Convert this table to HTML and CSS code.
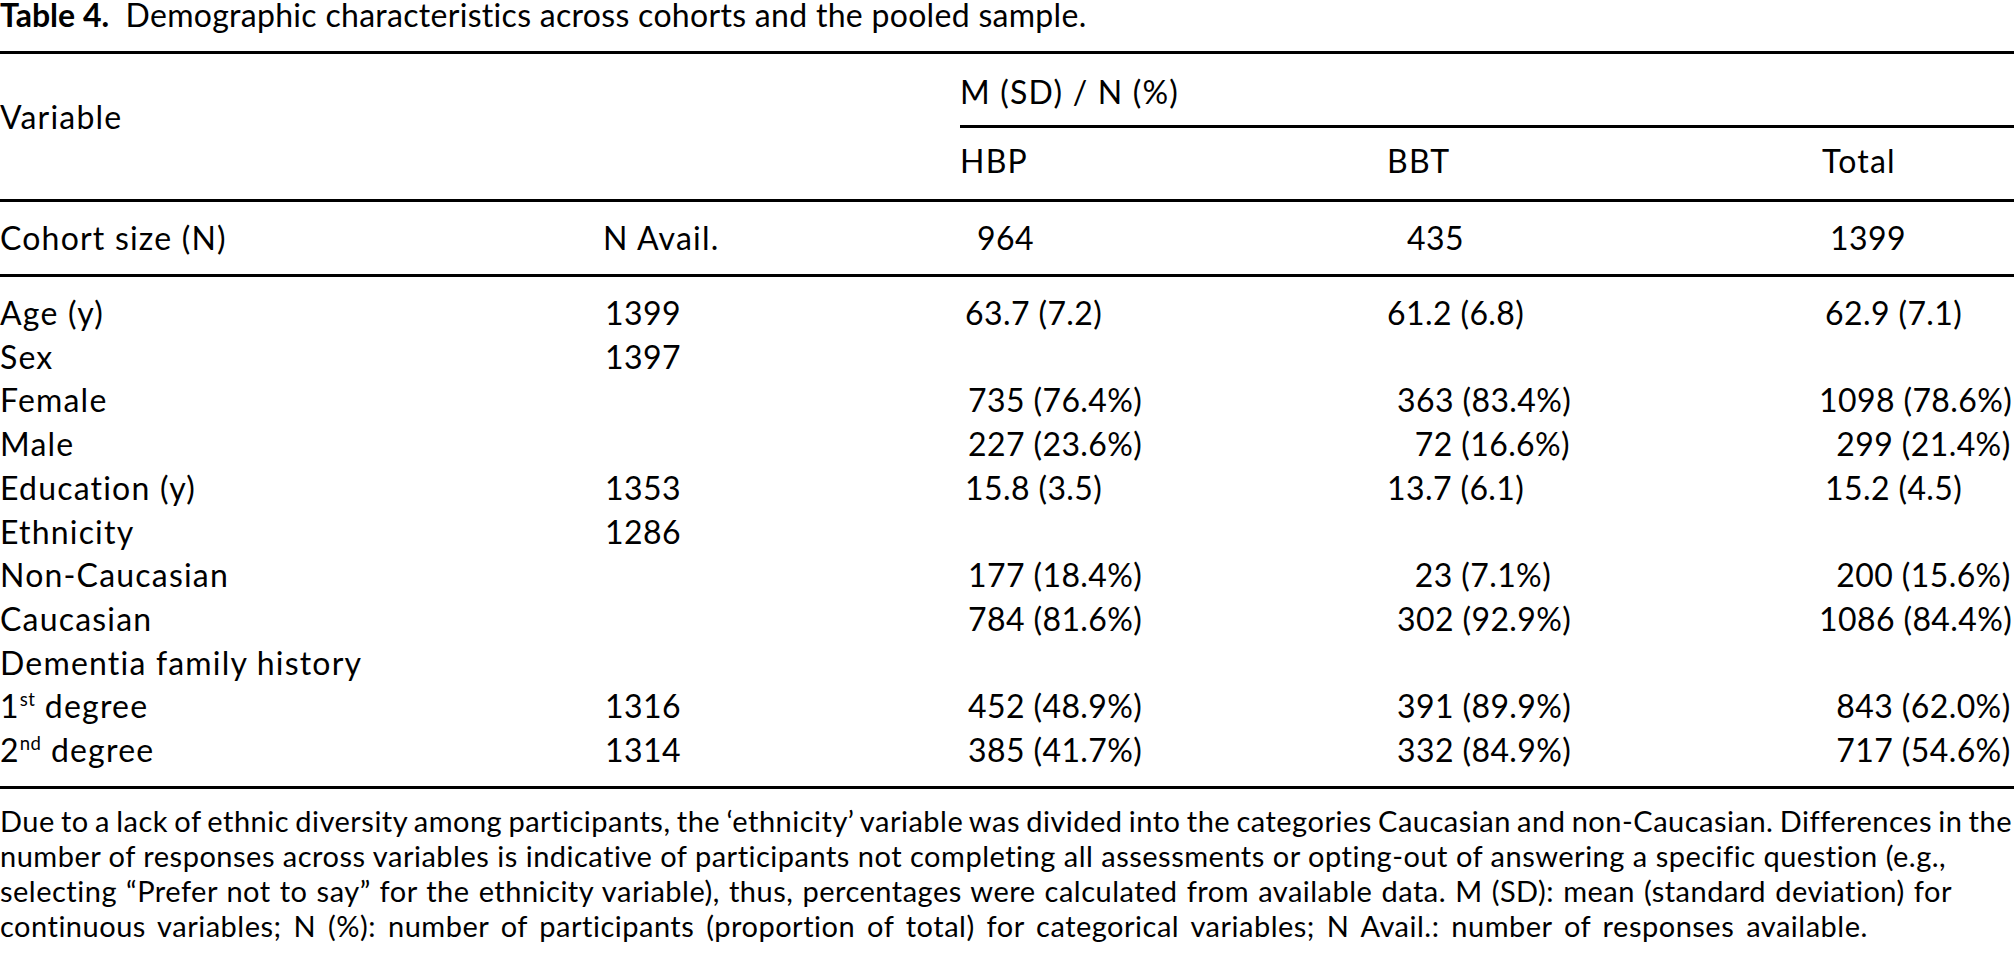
FILE: index.html
```html
<!DOCTYPE html>
<html lang="en">
<head>
<meta charset="utf-8">
<title>Table 4. Demographic characteristics</title>
<link rel="stylesheet" href="styles.css">
</head>
<body>
<div class="page">
  <p class="caption"><span class="label">Table 4.</span> Demographic characteristics across cohorts and the pooled sample.</p>
  <table class="tbl">
    <colgroup>
      <col class="c-var"><col class="c-avail"><col class="c-hbp"><col class="c-bbt"><col class="c-total">
    </colgroup>
    <thead>
      <tr class="h1">
        <th rowspan="2" colspan="2" class="var-h">Variable</th>
        <th colspan="3" class="group-h">M (SD) / N (%)</th>
      </tr>
      <tr class="h2">
        <th>HBP</th><th>BBT</th><th>Total</th>
      </tr>
    </thead>
    <tbody class="cohort">
      <tr><td>Cohort size (N)</td><td>N Avail.</td><td>964</td><td>435</td><td>1399</td></tr>
    </tbody>
    <tbody class="data">
      <tr class="mean first"><td>Age (y)</td><td>1399</td><td>63.7 (7.2)</td><td>61.2 (6.8)</td><td>62.9 (7.1)</td></tr>
      <tr><td>Sex</td><td>1397</td><td></td><td></td><td></td></tr>
      <tr><td>Female</td><td></td><td><span class="n">735</span> (76.4%)</td><td><span class="n">363</span> (83.4%)</td><td><span class="n">1098</span> (78.6%)</td></tr>
      <tr><td>Male</td><td></td><td><span class="n">227</span> (23.6%)</td><td><span class="n">72</span> (16.6%)</td><td><span class="n">299</span> (21.4%)</td></tr>
      <tr class="mean"><td>Education (y)</td><td>1353</td><td>15.8 (3.5)</td><td>13.7 (6.1)</td><td>15.2 (4.5)</td></tr>
      <tr><td>Ethnicity</td><td>1286</td><td></td><td></td><td></td></tr>
      <tr><td>Non-Caucasian</td><td></td><td><span class="n">177</span> (18.4%)</td><td><span class="n">23</span> (7.1%)</td><td><span class="n">200</span> (15.6%)</td></tr>
      <tr><td>Caucasian</td><td></td><td><span class="n">784</span> (81.6%)</td><td><span class="n">302</span> (92.9%)</td><td><span class="n">1086</span> (84.4%)</td></tr>
      <tr><td>Dementia family history</td><td></td><td></td><td></td><td></td></tr>
      <tr><td>1<sup>st</sup> degree</td><td>1316</td><td><span class="n">452</span> (48.9%)</td><td><span class="n">391</span> (89.9%)</td><td><span class="n">843</span> (62.0%)</td></tr>
      <tr class="last"><td>2<sup>nd</sup> degree</td><td>1314</td><td><span class="n">385</span> (41.7%)</td><td><span class="n">332</span> (84.9%)</td><td><span class="n">717</span> (54.6%)</td></tr>
    </tbody>
  </table>
  <div class="note">
    <p class="ln ln1">Due to a lack of ethnic diversity among participants, the ‘ethnicity’ variable was divided into the categories Caucasian and non-Caucasian. Differences in the</p>
    <p class="ln ln2">number of responses across variables is indicative of participants not completing all assessments or opting-out of answering a specific question (e.g.,</p>
    <p class="ln ln3">selecting “Prefer not to say” for the ethnicity variable), thus, percentages were calculated from available data. M (SD): mean (standard deviation) for</p>
    <p class="ln ln4">continuous variables; N (%): number of participants (proportion of total) for categorical variables; N Avail.: number of responses available.</p>
  </div>
</div>
</body>
</html>
```

FILE: styles.css
```css
html, body {
  margin: 0;
  padding: 0;
  background: #ffffff;
  color: #000000;
}

.page {
  width: 2014px;
  font-family: "Lato", "Noto Sans", "DejaVu Sans", sans-serif;
}

.caption {
  margin: 0 0 21px 0;
  font-size: 32px;
  line-height: 30px;
  letter-spacing: 0.3px;
  white-space: nowrap;
}

.caption .label {
  font-weight: 700;
  letter-spacing: 0;
  margin-right: 8px;
}

.tbl {
  width: 2014px;
  table-layout: fixed;
  border-collapse: separate;
  border-spacing: 0;
  font-size: 32px;
  letter-spacing: 0.4px;
  white-space: nowrap;
}

.c-var { width: 603px; }
.c-avail { width: 357px; }
.c-hbp { width: 427px; }
.c-bbt { width: 430px; }
.c-total { width: 197px; }

.tbl th,
.tbl td {
  padding: 0;
  text-align: left;
  font-weight: 400;
  vertical-align: top;
}

.tbl th,
.tbl td:first-child,
.cohort td:nth-child(2) {
  letter-spacing: 1.2px;
}

/* header */
.h1 th {
  border-top: 3px solid #000;
  line-height: 40px;
}

.var-h {
  padding-top: 43px !important;
  border-bottom: 3px solid #000;
}

.group-h {
  padding-top: 18px !important;
  padding-bottom: 13px !important;
  border-bottom: 3px solid #000;
}

.h2 th {
  line-height: 40px;
  padding-top: 13px;
  padding-bottom: 18px;
  border-bottom: 3px solid #000;
}

.h2 th:nth-child(3) { padding-left: 5px; }

/* cohort row */
.cohort td {
  line-height: 40px;
  padding-top: 16px;
  padding-bottom: 16px;
  border-bottom: 3px solid #000;
}

.cohort td:nth-child(3) { padding-left: 17px; }
.cohort td:nth-child(4) { padding-left: 20px; }
.cohort td:nth-child(5) { padding-left: 13px; }

/* data rows */
.data td {
  line-height: 43.7px;
}

.data .first td { padding-top: 14px; }

.data .last td {
  padding-bottom: 14px;
  border-bottom: 3px solid #000;
}

.data td:nth-child(2) { padding-left: 2px; }
.data td:nth-child(3) { padding-left: 8px; }
.data td:nth-child(4) { padding-left: 10px; }
.data td:nth-child(5) { padding-left: 2px; }

.data .mean td:nth-child(3) { padding-left: 5px; }
.data .mean td:nth-child(4) { padding-left: 0; }
.data .mean td:nth-child(5) { padding-left: 8px; }

.n {
  display: inline-block;
  min-width: 3ch;
  text-align: right;
  font-variant-numeric: tabular-nums;
}

.data td:nth-child(5) .n { min-width: 4ch; }

sup {
  font-size: 0.58em;
  line-height: 0;
  vertical-align: 0.65em;
  letter-spacing: 0.5px;
}

/* footnote */
.note {
  margin-top: 14px;
  font-size: 29px;
  letter-spacing: 0.5px;
}

.ln {
  margin: 0;
  line-height: 35px;
  white-space: nowrap;
}

.ln1, .ln2, .ln3 {
  text-align: justify;
  text-align-last: justify;
}

.ln1 { margin-right: 2px; word-spacing: -3px; }
.ln2 { margin-right: 96px; }
.ln3 { margin-right: 62px; }
.ln4 { word-spacing: 4px; }
```
